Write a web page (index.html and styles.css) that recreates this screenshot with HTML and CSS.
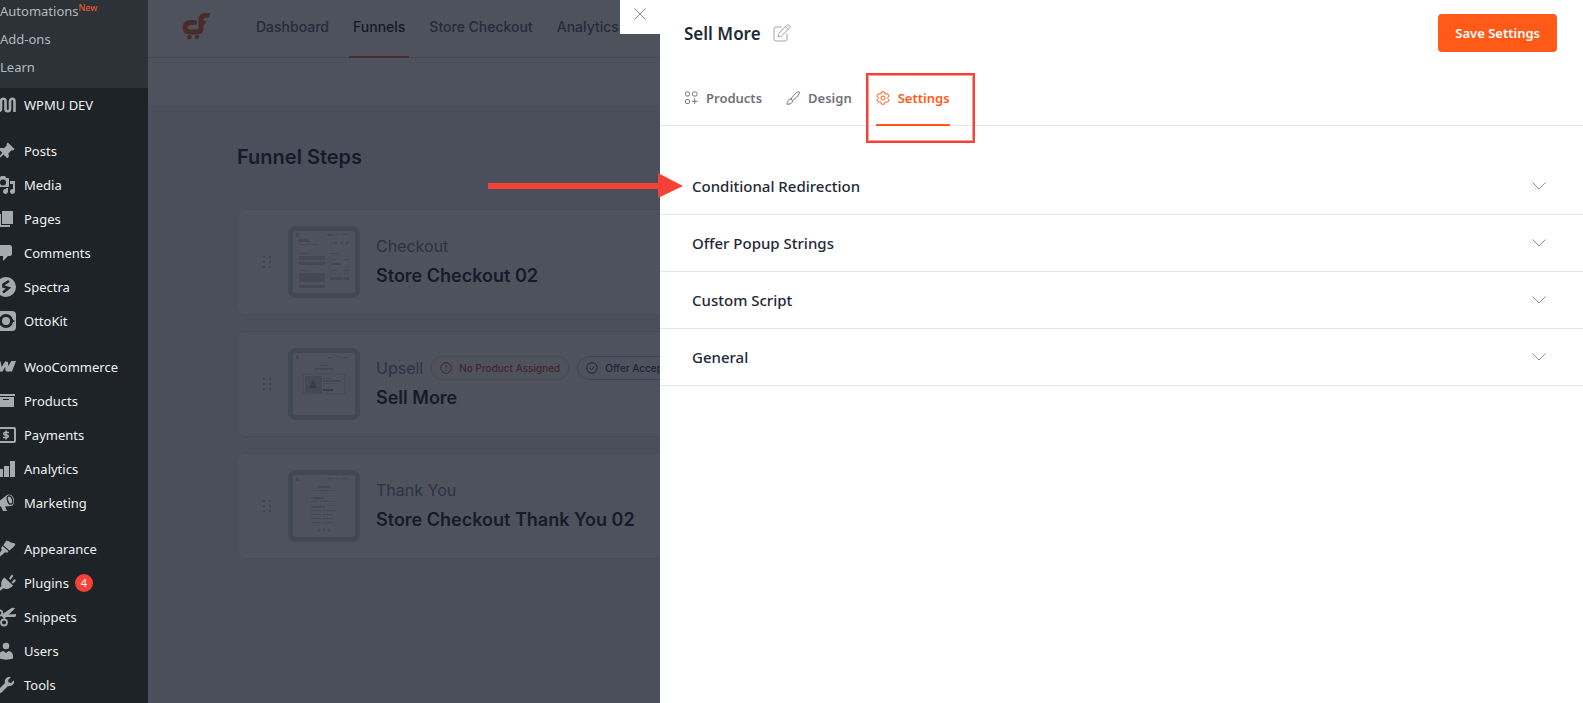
FILE: index.html
```html
<!DOCTYPE html>
<html lang="en">
<head>
<meta charset="UTF-8">
<meta name="viewport" content="width=device-width, initial-scale=1.0">
<title>Funnel Steps - Sell More</title>
<link rel="stylesheet" href="styles.css">
</head>
<body>
<nav class="sidebar" aria-label="Admin menu">
    <div class="submenu">
        <a href="#">Automations<sup>New</sup></a>
        <a href="#">Add-ons</a>
        <a href="#">Learn</a>
    </div>
    <a class="menu-item" href="#">
        <svg viewBox="0 0 20 20"><path d="M1 3v11a2 2 0 0 0 4 0V6a2.200 2.200 0 0 1 4.500 0v8a2.200 2.200 0 0 0 4.500 0V6a2.200 2.200 0 0 1 4.500 0v11" fill="none" stroke="currentColor" stroke-width="2.600"/></svg>
        WPMU DEV
    </a>
    <a class="menu-item group" href="#">
        <svg viewBox="0 0 20 20"><path d="M10.400 3l1.400-1.400 6.800 6.400-1.500 1.500-1.500-.3-3.200 3.200.5 3.200-1.700 1.600-3.700-3.600L2.400 18.200 1.600 18l.2-.9 4.500-5.300L3 8.500l1.600-1.700 3.300.4 3-3z" fill="currentColor"/></svg>
        Posts
    </a>
    <a class="menu-item" href="#">
        <svg viewBox="0 0 20 20"><path fill-rule="evenodd" d="M13 11V4c0-.6-.4-1-1-1h-1.700L9 1H5L3.700 3H2c-.6 0-1 .4-1 1v7c0 .6.4 1 1 1h10c.6 0 1-.4 1-1zM7 4.500a3 3 0 1 1 0 6 3 3 0 0 1 0-6zM14 6h5v10.500a2.500 2.500 0 1 1-2-2.400V9h-3zm-4 8.100V13h2v3.500a2.500 2.500 0 1 1-2-2.400z" fill="currentColor"/></svg>
        Media
    </a>
    <a class="menu-item" href="#">
        <svg viewBox="0 0 20 20"><path d="M6 15V2h11v13zm-1 1h9v2H3V5h2z" fill="currentColor"/></svg>
        Pages
    </a>
    <a class="menu-item" href="#">
        <svg viewBox="0 0 20 20"><path d="M5 2h9c1.100 0 2 .9 2 2v7c0 1.100-.9 2-2 2h-2l-5 5v-5H5c-1.100 0-2-.9-2-2V4c0-1.100.9-2 2-2z" fill="currentColor"/></svg>
        Comments
    </a>
    <a class="menu-item" href="#">
        <svg viewBox="0 0 20 20"><circle cx="10" cy="10" r="10" fill="currentColor"/><path d="M13 4L7.500 7.500v2l5 1.500L7 15.500" fill="none" stroke="#1d2327" stroke-width="2.600"/></svg>
        Spectra
    </a>
    <a class="menu-item" href="#">
        <svg viewBox="0 0 20 20"><rect width="20" height="20" rx="4" fill="currentColor"/><circle cx="10" cy="10" r="5.500" fill="none" stroke="#1d2327" stroke-width="3"/><path d="M15 7.500l4 2.500-4 2.500zM5 7.500L1 10l4 2.500z" fill="#1d2327"/></svg>
        OttoKit
    </a>
    <a class="menu-item group" href="#">
        <svg viewBox="0 0 20 20"><path d="M3 4.500L5 14l5.500-9 .5 9 5.500-9" fill="none" stroke="currentColor" stroke-linejoin="bevel" stroke-width="3"/><path d="M15.500 4H20l-4 10.500h-4.500z" fill="currentColor"/></svg>
        WooCommerce
    </a>
    <a class="menu-item" href="#">
        <svg viewBox="0 0 20 20"><path fill-rule="evenodd" d="M1 3h18v2H1zM2 6h16v10H2zm5 2v1h6V8z" fill="currentColor"/></svg>
        Products
    </a>
    <a class="menu-item" href="#">
        <svg viewBox="0 0 20 20"><rect x="1" y="3" width="18" height="14" rx="1" fill="none" stroke="currentColor" stroke-width="2"/><path d="M13 7.500H9a1.200 1.200 0 0 0 0 2.500h2a1.200 1.200 0 0 1 0 2.500H7M10 5.500v9" fill="none" stroke="currentColor" stroke-width="1.600"/></svg>
        Payments
    </a>
    <a class="menu-item" href="#">
        <svg viewBox="0 0 20 20"><path d="M14 2h5v16h-5zM8 7h5v11H8zM2 10h5v8H2z" fill="currentColor"/></svg>
        Analytics
    </a>
    <a class="menu-item" href="#">
        <svg viewBox="0 0 20 20"><path d="M2 9l9-7c2-1 5-1 6.500 3s0 8-2.500 8l-6 .5 2 4.500H7l-2-4.500C2 14 .500 11 2 9z" fill="currentColor"/><ellipse cx="14" cy="7" rx="2.500" ry="4.300" fill="none" stroke="#1d2327" stroke-width="1.300" transform="rotate(-18 14 7)"/></svg>
        Marketing
    </a>
    <a class="menu-item group" href="#">
        <svg viewBox="0 0 20 20"><path d="M14.500 3.500c1.800-.2 3.400.7 5 1.500-1.300 3-3.800 4.600-6 6.500L7.300 6.200 10 2c1.500-.8 3.300.2 4.500 1.500zM6.600 7l6 5.200-1.300 1.500-2.200-.5C6.600 14.800 5 18 1.500 18.500 0 17 4 14 5.700 11.200l-.6-2.700z" fill="currentColor"/></svg>
        Appearance
    </a>
    <a class="menu-item" href="#">
        <svg viewBox="0 0 20 20"><path d="M13 5.500l2.800-4 1.600 1.200L14.500 7zM15.600 9.300L18.500 6 20 7.400l-3 3.300zM8.500 4.500l8.500 8c-2.500 3-6 4.500-9.500 2.800L3 18.500l-1.500-1.600L5.500 13c-1-3.500.3-6.500 3-8.500z" fill="currentColor"/></svg>
        Plugins <span class="count">4</span>
    </a>
    <a class="menu-item" href="#">
        <svg viewBox="0 0 20 20"><path d="M5 8L14 2c2-1.500 4-1.500 5-.5L8 12zM6 8l14-1v1.500c0 1-1 1.500-2 1.500H8z" fill="currentColor"/><circle cx="3.500" cy="6" r="2.700" fill="none" stroke="currentColor" stroke-width="1.800"/><circle cx="8" cy="15.500" r="3" fill="none" stroke="currentColor" stroke-width="1.800"/></svg>
        Snippets
    </a>
    <a class="menu-item" href="#">
        <svg viewBox="0 0 20 20"><circle cx="10" cy="5" r="3.300" fill="currentColor"/><path d="M3 17.500c-.5-5 1-7 4.500-7.500l2.500 2 2.500-2c3.500.5 5 2.500 4.500 7.500-4 1.500-10 1.500-14 0z" fill="currentColor"/></svg>
        Users
    </a>
    <a class="menu-item" href="#">
        <svg viewBox="0 0 20 20"><path d="M16.700 9.800c-1.300 1.300-3.100 1.700-4.700 1.100l-6.500 6.600c-.8.8-2.200.8-3 0s-.8-2.200 0-3L9 8c-.5-1.600-.2-3.400 1.100-4.700 1.300-1.300 3.200-1.700 4.800-1.100l-2.800 2.800.6 2.400 2.400.6 2.700-2.800c.6 1.500.2 3.300-1.100 4.600z" fill="currentColor"/></svg>
        Tools
    </a>
</nav>

<main class="page">
    <header class="topbar">
        <svg class="logo" viewBox="0 0 28 28"><g fill="none" stroke="#f06434" stroke-linecap="round" stroke-linejoin="round" stroke-width="5"><path d="M12.500 10.500H9c-4 0-6 2-6 5s2 4.500 5 4.500h7c3 0 4-1.500 4-4V8c0-3 1.500-4.500 4-4.500"/><path d="M20 10.500h2" stroke-width="4"/></g><path d="M22 1h6c0 3-1.500 5-4 5h-2z" fill="#f06434"/><circle cx="7.500" cy="25" r="2.300" fill="#f06434"/><circle cx="15" cy="25" r="2.300" fill="#f06434"/></svg>
        <nav class="topnav" aria-label="Funnels">
            <a href="#">Dashboard</a>
            <a href="#" class="active">Funnels</a>
            <a href="#">Store Checkout</a>
            <a href="#">Analytics</a>
        </nav>
    </header>
    <div class="toolbar"></div>
    <section class="steps">
        <h1>Funnel Steps</h1>
        <article class="step">
            <svg class="drag" viewBox="0 0 10 14"><path d="M1 2h2M7 2h2M1 7h2M7 7h2M1 12h2M7 12h2"/></svg>
            <svg class="thumb" viewBox="0 0 62 62"><g fill="#d1d5db"><path d="M3 2h3v4H3zM34 3h6v2h-6zM42 3h5v1h-5zM49 3h6v1h-6z"/><path d="M6 8h10v3H6zM6 13h19v1H6z"/><circle cx="43" cy="12" r="1.500"/><circle cx="49" cy="12" r="1.500"/><circle cx="54" cy="12" r="1.500"/><path d="M6 22h10v1H6zM6 25h26v4H6zM6 31h26v3H6zM6 39h10v1H6zM6 42h26v9H6zM6 54h26v3H6zM36 22h10v1H36zM38 28h5v1h-5zM51 28h3v1h-3zM38 32h10v2H38zM38 39h5v1h-5zM50 39h4v1h-4zM37 46h12v3H37zM50 46h6v3h-6z"/></g><rect x="37" y="25" width="18" height="18" fill="none" stroke="#e5e7eb"/></svg>
            <div class="step-info">
                <div class="step-type">Checkout</div>
                <h2>Store Checkout 02</h2>
            </div>
        </article>
        <article class="step">
            <svg class="drag" viewBox="0 0 10 14"><path d="M1 2h2M7 2h2M1 7h2M7 7h2M1 12h2M7 12h2"/></svg>
            <svg class="thumb" viewBox="0 0 62 62"><path d="M3 2h3v4H3zM34 4h6v1h-6zM42 3h5v1h-5zM49 4h6v1h-6zM27 12h8v1h-8zM22 15h18v2H22zM12 23h17v17H12zM30 25h9v1h-9zM30 27h18v2H30zM30 30h15v1H30z" fill="#d1d5db"/><path d="M20 27l4 8h-8zM30 36h10v2H30z" fill="#9ca3af"/><rect x="10" y="21" width="42" height="20" rx="1" fill="none" stroke="#d1d5db"/></svg>
            <div class="step-info">
                <div class="step-type">Upsell
                    <span class="badge warn"><svg viewBox="0 0 12 12"><circle cx="6" cy="6" r="5.300"/><path d="M6 3v3.500M6 8v1.200"/></svg>No Product Assigned</span>
                    <span class="badge info"><svg viewBox="0 0 12 12"><circle cx="6" cy="6" r="5.300"/><path d="M4 6.200l1.400 1.400L8.200 4.600"/></svg>Offer Accepted</span>
                </div>
                <h2>Sell More</h2>
            </div>
        </article>
        <article class="step">
            <svg class="drag" viewBox="0 0 10 14"><path d="M1 2h2M7 2h2M1 7h2M7 7h2M1 12h2M7 12h2"/></svg>
            <svg class="thumb" viewBox="0 0 62 62"><path d="M3 2h3v4H3zM34 3h6v1h-6zM42 3h5v1h-5zM49 3h6v1h-6zM25 11h12v2H25zM20 15h22v1H20zM18 22h13v2H18zM18 26h7v1h-7zM27 26h7v1h-7zM36 26h7v1h-7zM18 31h14v2H18zM18 35h10v1H18zM30 35h12v1H30zM18 39h10v1H18zM30 39h10v1H30zM18 43h10v1H18zM30 43h10v1H30zM18 47h10v1H18zM30 47h10v1H30z" fill="#d1d5db"/><g fill="none" stroke="#d1d5db"><circle cx="26" cy="55" r="1"/><circle cx="31" cy="55" r="1"/><circle cx="36" cy="55" r="1"/></g></svg>
            <div class="step-info">
                <div class="step-type">Thank You</div>
                <h2>Store Checkout Thank You 02</h2>
            </div>
        </article>
    </section>
</main>

<div class="overlay">
    <button class="close" aria-label="Close">
        <svg viewBox="0 0 12 12"><path d="M.5.5l11 11M11.500.5l-11 11"/></svg>
    </button>
    <aside class="drawer">
        <header class="drawer-head">
            <h2>Sell More</h2>
            <button class="edit" aria-label="Edit name">
                <svg viewBox="0 0 18 18"><path d="M8.500 3H3a2 2 0 0 0-2 2v10a2 2 0 0 0 2 2h9a2 2 0 0 0 2-2V9.500M5 13l.8-3.500L13.800 1.200a1.500 1.500 0 0 1 2.200 0l.6.6a1.500 1.500 0 0 1 0 2.200L8.500 12z"/><path d="M12.500 2.700l2.700 2.700"/></svg>
            </button>
            <button class="save">Save Settings</button>
        </header>
        <nav class="tabs" aria-label="Step settings">
            <a href="#">
                <svg viewBox="0 0 14 14"><rect x="1.500" y="1" width="4" height="4" rx="1.300"/><rect x="8.500" y="1" width="4.500" height="4" rx="1.300"/><rect x="1.500" y="8.500" width="4" height="4" rx="1.300"/><path d="M10.700 7.500v5.500M8 10.300h5.500"/></svg>
                Products
            </a>
            <a href="#">
                <svg viewBox="0 0 14 14"><path d="M5 8.200C7 4.500 10.500 1 12.500.7c1-.1 1.200.6.9 1.300C12.500 4.500 9.500 7.800 6.500 9.500M5 8.200a2.400 2.400 0 0 1 1.500 1.600c.3 2-2.500 3.900-5.900 3.300C2 12 1.500 11 2.100 9.700 2.600 8.500 3.800 7.900 5 8.200z"/></svg>
                Design
            </a>
            <a href="#" class="active">
                <svg viewBox="0 0 14 14"><path d="M5.600.8h2.800l.4 1.700 1.200.7 1.700-.5 1.400 2.400-1.200 1.200v1.400l1.200 1.200-1.400 2.400-1.700-.5-1.200.7-.4 1.700H5.600l-.4-1.700-1.200-.7-1.700.5L.9 8.900l1.200-1.200V6.300L.9 5.100l1.400-2.400 1.700.5 1.200-.7z"/><circle cx="7" cy="7" r="2"/></svg>
                Settings
                <span class="highlight"></span>
            </a>
        </nav>
        <div class="accordion">
            <button class="row" aria-expanded="false">Conditional Redirection
                <svg viewBox="0 0 14 8"><path d="M.5.5L7 7 13.500.5"/></svg>
            </button>
            <button class="row" aria-expanded="false">Offer Popup Strings
                <svg viewBox="0 0 14 8"><path d="M.5.5L7 7 13.500.5"/></svg>
            </button>
            <button class="row" aria-expanded="false">Custom Script
                <svg viewBox="0 0 14 8"><path d="M.5.5L7 7 13.500.5"/></svg>
            </button>
            <button class="row" aria-expanded="false">General
                <svg viewBox="0 0 14 8"><path d="M.5.5L7 7 13.500.5"/></svg>
            </button>
            <svg class="arrow" viewBox="0 0 196 26"><path d="M0 10h170V0l25 13-25 12V16H0z"/></svg>
        </div>
    </aside>
</div>
</body>
</html>
```

FILE: styles.css
```css
* {
    box-sizing: border-box;
}

body, html {
    margin: 0;
    padding: 0;
    height: 100%;
    overflow: hidden;
}

body {
    display: flex;
    font-family: "Noto Sans", sans-serif;
}

h1, h2 {
    margin: 0;
    font-weight: 600;
}

a {
    color: inherit;
    text-decoration: none;
}

button {
    border: 0;
    background: none;
    padding: 0;
    font-family: inherit;
    cursor: pointer;
}

svg {
    flex: none;
}

/* admin menu */
.sidebar {
    flex: none;
    width: 148px;
    overflow: hidden;
    background: #1d2327;
    color: #f0f0f1;
    font-size: 13px;
}

.submenu {
    margin-top: -3px;
    padding-bottom: 7px;
    background: #2c3338;
    color: #b4b9be;
}

.submenu a {
    display: block;
    line-height: 28px;
}

.submenu sup {
    color: #ff5a1f;
    font-size: 9px;
    line-height: 1;
}

.menu-item {
    display: flex;
    align-items: center;
    gap: 8px;
    height: 34px;
    white-space: nowrap;
}

.menu-item svg {
    width: 20px;
    height: 20px;
    margin-left: -4px;
    color: #a7aaad;
}

.group {
    margin-top: 12px;
}

.count {
    width: 18px;
    margin-left: -2px;
    border-radius: 9px;
    background: #f44336;
    color: #fff;
    font-size: 11px;
    line-height: 18px;
    text-align: center;
}

/* funnel page */
.page {
    flex: 1;
    background: #f3f4f6;
    font-family: Inter, sans-serif;
}

.topbar {
    display: flex;
    height: 58px;
    padding-left: 34px;
    border-bottom: 1px solid #d9dce1;
    background: #fff;
}

.logo {
    width: 28px;
    height: 28px;
    margin-top: 12px;
}

.topnav {
    display: flex;
    margin-left: 34px;
    color: #5b6472;
    font-size: 14px;
    font-weight: 500;
    line-height: 54px;
}

.topnav a {
    height: 58px;
    margin: 0 8px;
    padding: 0 4px;
}

.topnav .active {
    border-bottom: 2px solid #f06434;
    color: #111827;
}

.toolbar {
    height: 47px;
    background: #fff;
}

.steps {
    display: flex;
    flex-direction: column;
    gap: 16px;
    padding: 38px 89px;
}

h1 {
    margin-bottom: 22px;
    color: #1f2937;
    font-size: 20px;
    line-height: 28px;
}

.step {
    display: flex;
    align-items: center;
    height: 106px;
    padding-left: 24px;
    border: 1px solid #e5e7eb;
    border-radius: 8px;
    background: #fff;
}

.drag {
    width: 10px;
    height: 14px;
    stroke: #c4c9d1;
    stroke-width: 2;
}

.thumb {
    width: 72px;
    height: 72px;
    margin: 0 16px;
    border: 5px solid #ccd3de;
    border-radius: 8px;
}

.step-type {
    display: flex;
    align-items: center;
    gap: 8px;
    height: 24px;
    margin-bottom: 4px;
    color: #7186a0;
    font-size: 16px;
}

.step h2 {
    color: #1f2937;
    font-size: 18px;
    line-height: 28px;
}

.badge {
    display: flex;
    align-items: center;
    gap: 7px;
    height: 24px;
    padding: 0 8px;
    border: 1px solid;
    border-radius: 12px;
    font-size: 10px;
    font-weight: 500;
}

.badge svg {
    width: 12px;
    height: 12px;
    fill: none;
    stroke: currentColor;
}

.warn {
    border-color: #f5d5c0;
    color: #e0562e;
}

.info {
    border-color: #a5d8e6;
    color: #24587a;
}

/* drawer */
.overlay {
    position: fixed;
    inset: 0 0 0 148px;
    display: grid;
    grid-template-columns: 40px 1fr;
    align-items: start;
    padding-left: 472px;
    background: rgba(17, 24, 39, 0.75);
}

.close {
    height: 34px;
    padding-bottom: 4px;
    background: #fff;
}

.close svg {
    width: 12px;
    height: 12px;
    fill: none;
    stroke: #8a8a8a;
}

.drawer {
    height: 100vh;
    background: #fff;
}

.drawer-head {
    display: flex;
    align-items: center;
    gap: 12px;
    height: 66px;
    padding: 0 26px 0 24px;
}

.drawer-head h2 {
    color: #1f2937;
    font-size: 17px;
}

.edit svg {
    display: block;
    width: 18px;
    height: 18px;
    fill: none;
    stroke: #a0a5ad;
}

.save {
    height: 38px;
    margin-left: auto;
    padding: 0 17px;
    border-radius: 4px;
    background: #ff5a18;
    color: #fff;
    font-size: 13px;
    font-weight: 600;
}

.tabs {
    display: flex;
    gap: 24px;
    height: 60px;
    padding: 0 24px;
    border-bottom: 1px solid #e5e7eb;
    color: #6f7378;
    font-size: 13px;
    font-weight: 600;
}

.tabs a {
    position: relative;
    display: flex;
    align-items: center;
    gap: 8px;
    height: 60px;
    padding-top: 6px;
    border-bottom: 2px solid transparent;
}

.tabs svg {
    width: 14px;
    height: 14px;
    fill: none;
    stroke: currentColor;
}

.tabs .active {
    border-color: #ff5a18;
    color: #ff5a18;
}

.highlight {
    position: absolute;
    inset: 7px -25px -19px -10px;
    border: 2px solid #f44336;
    outline: 1px solid #f9a19a;
    outline-offset: -3px;
}

.accordion {
    position: relative;
    padding-top: 32px;
}

.row {
    display: flex;
    align-items: center;
    justify-content: space-between;
    width: 100%;
    height: 57px;
    padding: 0 37px 0 32px;
    border-bottom: 1px solid #e5e7eb;
    color: #1f2937;
    font-size: 15px;
    font-weight: 500;
}

.row svg {
    width: 14px;
    height: 8px;
    fill: none;
    stroke: #8a8f98;
}

.arrow {
    position: absolute;
    top: 47px;
    left: -172px;
    width: 196px;
    height: 26px;
    fill: #f44336;
}
```
